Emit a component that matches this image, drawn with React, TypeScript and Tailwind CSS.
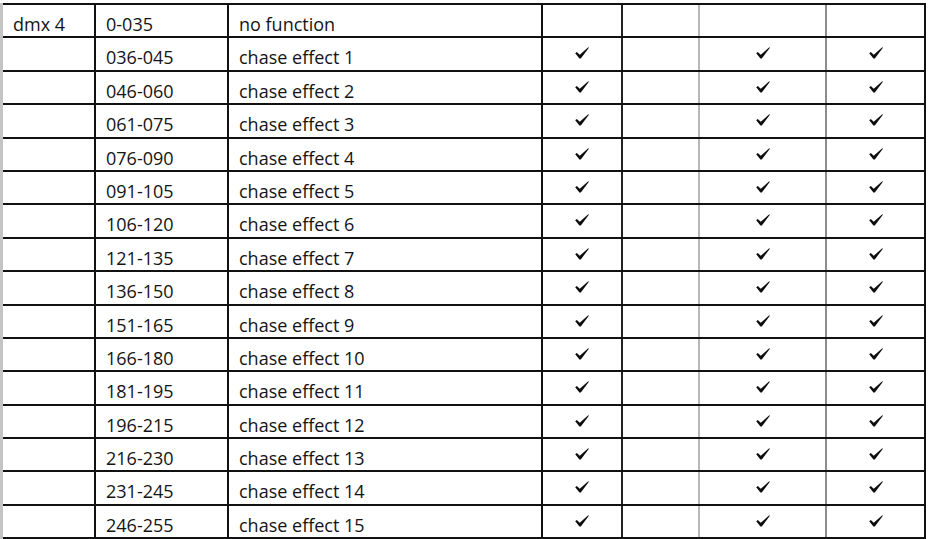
import React from "react";

const rows: { dmx: string; range: string; fn: string; checks: boolean }[] = [
  { dmx: "dmx 4", range: "0-035", fn: "no function", checks: false },
  { dmx: "", range: "036-045", fn: "chase effect 1", checks: true },
  { dmx: "", range: "046-060", fn: "chase effect 2", checks: true },
  { dmx: "", range: "061-075", fn: "chase effect 3", checks: true },
  { dmx: "", range: "076-090", fn: "chase effect 4", checks: true },
  { dmx: "", range: "091-105", fn: "chase effect 5", checks: true },
  { dmx: "", range: "106-120", fn: "chase effect 6", checks: true },
  { dmx: "", range: "121-135", fn: "chase effect 7", checks: true },
  { dmx: "", range: "136-150", fn: "chase effect 8", checks: true },
  { dmx: "", range: "151-165", fn: "chase effect 9", checks: true },
  { dmx: "", range: "166-180", fn: "chase effect 10", checks: true },
  { dmx: "", range: "181-195", fn: "chase effect 11", checks: true },
  { dmx: "", range: "196-215", fn: "chase effect 12", checks: true },
  { dmx: "", range: "216-230", fn: "chase effect 13", checks: true },
  { dmx: "", range: "231-245", fn: "chase effect 14", checks: true },
  { dmx: "", range: "246-255", fn: "chase effect 15", checks: true },
];

const heights = [
  "h-[33px]", "h-[34px]", "h-[33px]", "h-[34px]", "h-[33px]", "h-[33px]", "h-[34px]", "h-[33px]",
  "h-[34px]", "h-[33px]", "h-[33px]", "h-[34px]", "h-[33px]", "h-[33px]", "h-[34px]", "h-[35px] border-b-2 border-b-[#111]",
];

function Check() {
  return (
    <svg width="14" height="12" viewBox="0 0 13 11" className="block">
      <path d="M0.2 5.7 L1.7 4.6 L4.4 7.2 L12.3 0.1 L12.9 0.6 L5.4 10.5 L4.1 10.5 Z" fill="#0d0d0d" />
    </svg>
  );
}

export default function App() {
  return (
    <div
      className="w-[931px] h-[539px] bg-white pt-[3px] text-[18px] text-[#141414] overflow-hidden"
      style={{ fontFamily: '"Open Sans", "Noto Sans", sans-serif' }}
    >
      <div className="flex flex-col w-[926px] border-l-[3px] border-l-[#c4c4c4]">
        {rows.map((r, i) => (
          <div key={i} className={`flex box-border border-t-2 border-t-[#111] ${heights[i]}`}>
            <div className="w-[93px] border-r-2 border-r-[#111] pl-[10px] pt-[7px] leading-[24px] whitespace-nowrap">
              {r.dmx}
            </div>
            <div className="w-[133px] border-r-2 border-r-[#111] pl-[10px] pt-[7px] leading-[24px] whitespace-nowrap">
              {r.range}
            </div>
            <div className="w-[314px] border-r-2 border-r-[#111] pl-[10px] pt-[7px] leading-[24px] whitespace-nowrap">
              {r.fn}
            </div>
            <div className="w-[80px] border-r-2 border-r-[#222] flex justify-center items-start pt-[9px]">
              {r.checks && <Check />}
            </div>
            <div className="w-[77px] border-r-2 border-r-[#b8b8b8]" />
            <div className="w-[127px] border-r-2 border-r-[#8c8c8c] flex justify-center items-start pt-[9px]">
              {r.checks && <Check />}
            </div>
            <div className="w-[99px] border-r-2 border-r-[#111] flex justify-center items-start pt-[9px]">
              {r.checks && <Check />}
            </div>
          </div>
        ))}
      </div>
    </div>
  );
}
